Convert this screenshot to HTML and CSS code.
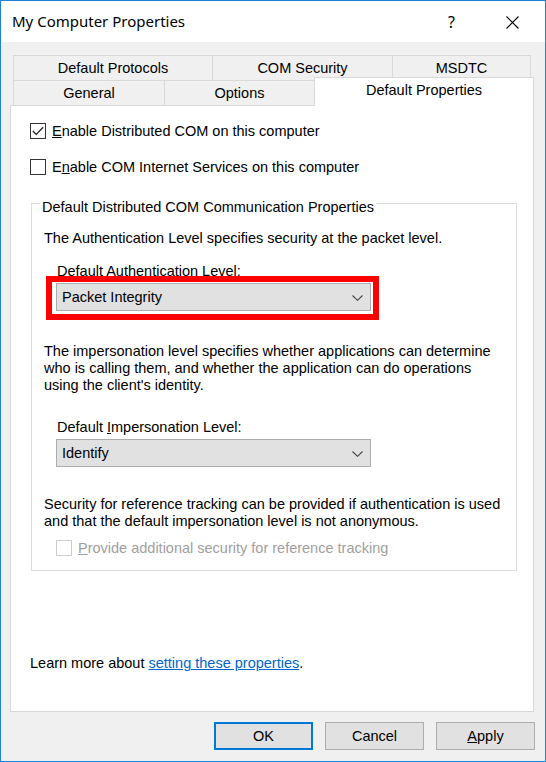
FILE: index.html
```html
<!DOCTYPE html>
<html>
<head>
<meta charset="utf-8">
<title>My Computer Properties</title>
<link rel="stylesheet" href="styles.css">
</head>
<body>
<div class="window">
  <div class="titlebar">
    <div class="title">My Computer Properties</div>
    <div class="cap-btn help">?</div>
    <div class="cap-btn close">
      <svg width="13" height="13" viewBox="0 0 13 13"><path d="M0.5 0.5 L12.5 12.5 M12.5 0.5 L0.5 12.5" stroke="#000" stroke-width="1.1" fill="none"/></svg>
    </div>
  </div>
  <div class="client">
    <div class="tabs">
      <div class="tabrow">
        <div class="tab w-proto">Default Protocols</div>
        <div class="tab w-sec">COM Security</div>
        <div class="tab w-msdtc tab-last">MSDTC</div>
      </div>
      <div class="tabrow">
        <div class="tab w-gen">General</div>
        <div class="tab w-opt">Options</div>
        <div class="tab tab-sel">Default Properties</div>
      </div>
    </div>
    <div class="panel">
      <div class="check">
        <svg class="box" width="16" height="16" viewBox="0 0 16 16"><rect x="0.5" y="0.5" width="15" height="15" fill="#fff" stroke="#333"/><polyline points="2.8,8 6.2,11.4 13.2,4.2" fill="none" stroke="#222" stroke-width="1.3"/></svg>
        <span class="check-label"><u>E</u>nable Distributed COM on this computer</span>
      </div>
      <div class="check">
        <svg class="box" width="16" height="16" viewBox="0 0 16 16"><rect x="0.5" y="0.5" width="15" height="15" fill="#fff" stroke="#333"/></svg>
        <span class="check-label">E<u>n</u>able COM Internet Services on this computer</span>
      </div>

      <div class="group">
        <div class="legend">Default Distributed COM Communication Properties</div>
        <p class="para p-auth">The Authentication Level specifies security at the packet level.</p>
        <div class="lbl lbl-auth">Default Authentication Level:</div>
        <div class="red">
          <div class="combo">
            <span>Packet Integrity</span>
            <svg width="11" height="6" viewBox="0 0 11 6"><polyline points="0.5,0.5 5.5,5.3 10.5,0.5" fill="none" stroke="#444" stroke-width="1.1"/></svg>
          </div>
        </div>
        <p class="para p-imp">The impersonation level specifies whether applications can determine<br>who is calling them, and whether the application can do operations<br>using the client's identity.</p>
        <div class="lbl lbl-imp">Default <u>I</u>mpersonation Level:</div>
        <div class="combo combo-imp">
          <span>Identify</span>
          <svg width="11" height="6" viewBox="0 0 11 6"><polyline points="0.5,0.5 5.5,5.3 10.5,0.5" fill="none" stroke="#444" stroke-width="1.1"/></svg>
        </div>
        <p class="para p-sec">Security for reference tracking can be provided if authentication is used<br>and that the default impersonation level is not anonymous.</p>
        <div class="check check-dis">
          <svg class="box" width="16" height="16" viewBox="0 0 16 16"><rect x="0.5" y="0.5" width="15" height="15" fill="#fff" stroke="#cccccc"/></svg>
          <span class="check-label"><u>P</u>rovide additional security for reference tracking</span>
        </div>
      </div>

      <p class="learn">Learn more about <a class="link" href="#">setting these properties</a>.</p>
    </div>
    <div class="buttons">
      <div class="btn btn-default">OK</div>
      <div class="btn">Cancel</div>
      <div class="btn"><u>A</u>pply</div>
    </div>
  </div>
</div>
</body>
</html>
```

FILE: styles.css
```css
* { box-sizing: border-box; }
html, body { margin: 0; padding: 0; }
body {
  width: 546px;
  height: 762px;
  overflow: hidden;
  background: #fff;
  font-family: "Liberation Sans", Arial, sans-serif;
  font-size: 14.5px;
  line-height: 17px;
  color: #000;
}
.window {
  width: 546px;
  height: 762px;
  border: 1px solid #1883d7;
  background: #f0f0f0;
  display: flex;
  flex-direction: column;
}
.titlebar {
  height: 41px;
  flex: none;
  background: #fff;
  display: flex;
  padding-right: 2px;
}
.title {
  flex: 1;
  font-family: "Noto Sans", sans-serif;
  font-size: 15px;
  line-height: 20px;
  padding: 10px 0 0 11px;
}
.cap-btn {
  width: 61px;
  height: 41px;
  padding-top: 2px;
  display: flex;
  align-items: center;
  justify-content: center;
}
.help {
  font-family: "Noto Sans", sans-serif;
  font-size: 16px;
}
.client {
  flex: 1;
  padding: 13px 10px 0 9px;
}
.tabs { margin-left: 3px; }
.tabrow { display: flex; height: 25px; }
.tab {
  height: 25px;
  border-top: 1px solid #d9d9d9;
  border-left: 1px solid #d9d9d9;
  display: flex;
  align-items: center;
  justify-content: center;
  white-space: nowrap;
}
.tab-last { border-right: 1px solid #d9d9d9; }
.w-proto { width: 199px; }
.w-sec { width: 180px; }
.w-msdtc { width: 139px; }
.w-gen { width: 151px; }
.w-opt { width: 150px; }
.tab-sel {
  width: 220px;
  height: 29px;
  margin-top: -3px;
  background: #fff;
  border: 1px solid #d9d9d9;
  border-bottom: none;
  position: relative;
  z-index: 1;
  align-items: flex-start;
  padding-top: 4px;
}
.panel {
  width: 524px;
  height: 607px;
  background: #fff;
  border: 1px solid #d9d9d9;
  padding: 17px 0 0 19px;
}
.check {
  display: flex;
  align-items: center;
  height: 16px;
}
.check + .check { margin-top: 20px; }
.box { flex: none; display: block; }
.check-label { margin-left: 6px; white-space: nowrap; }
.group {
  margin: 28px 0 0 1px;
  width: 486px;
  border: 1px solid #dcdcdc;
  padding: 0 0 14px 0;
}
.legend {
  width: fit-content;
  margin: -5px 0 0 8px;
  padding: 0 2px;
  background: #fff;
  white-space: nowrap;
}
.para { margin: 0 0 0 12px; white-space: nowrap; }
.p-auth { margin-top: 14px; }
.lbl { margin-left: 25px; }
.lbl-auth { margin-top: 16px; }
.red {
  margin: -4px 0 0 14px;
  width: 333px;
  border: 6px solid #ff0000;
  padding: 1px 2px 3px 4px;
}
.combo {
  width: 315px;
  height: 28px;
  border: 1px solid #adadad;
  background: #e1e1e1;
  display: flex;
  align-items: center;
  justify-content: space-between;
  padding: 1px 7px 0 5px;
}
.combo svg { display: block; }
.p-imp { margin-top: 23px; }
.lbl-imp { margin-top: 25px; }
.combo-imp { margin: 3px 0 0 24px; }
.p-sec { margin-top: 29px; }
.check-dis { margin: 10px 0 0 24px; color: #a0a0a0; }
.learn { margin: 84px 0 0 0; }
.link { color: #0066cc; text-decoration: underline; }
.buttons {
  display: flex;
  justify-content: flex-end;
  gap: 12px;
  margin-top: 10px;
}
.btn {
  width: 99px;
  height: 28px;
  background: #e1e1e1;
  border: 1px solid #adadad;
  display: flex;
  align-items: center;
  justify-content: center;
}
.btn-default { border: 2px solid #0078d7; }
```
